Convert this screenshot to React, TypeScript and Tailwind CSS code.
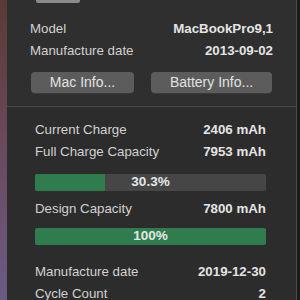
import React from "react";

const font = { fontFamily: '"Liberation Sans", Arial, sans-serif' };

function Row({ label, value }: { label: string; value: string }) {
  return (
    <div className="flex h-[22px] items-center justify-between">
      <span className="text-[13.3px] text-[#d2d2d2]">{label}</span>
      <span className="text-[13.3px] font-bold text-[#e4e4e4]">{value}</span>
    </div>
  );
}

function Bar({ pct, label }: { pct: number; label: string }) {
  return (
    <div className="relative h-[17px] rounded-[2px] bg-[#464646] overflow-hidden">
      <div className="h-full bg-[#2f7d4e]" style={{ width: `${pct}%` }} />
      <div className="absolute inset-0 flex items-center justify-center text-[13.5px] font-bold text-[#e6e6e6]">
        {label}
      </div>
    </div>
  );
}

export default function App() {
  return (
    <div className="flex h-[300px] w-[300px] overflow-hidden" style={font}>
      <div className="w-[7px] shrink-0 bg-gradient-to-b from-[#5a3a36] via-[#6a4a5e] to-[#6b5a86]" />
      <div className="flex flex-1 flex-col overflow-hidden bg-[#2f2f2f]">
        <div className="relative h-[106px] shrink-0 px-[23px]">
          <div className="absolute left-[29px] top-[-3px] h-[6px] w-[44px] rounded-[2px] bg-[#8a8a8a]" />
          <div className="pt-[18px]">
            <Row label="Model" value="MacBookPro9,1" />
            <Row label="Manufacture date" value="2013-09-02" />
          </div>
          <div className="mt-[10px] flex gap-[17px] px-[1px]">
            <div className="flex h-[21px] w-[104px] items-center justify-center rounded-[4px] bg-[#5c5c5c] text-[14px] text-[#e2e2e2] shadow-[0_1px_0_#3a3a3a]">
              Mac Info...
            </div>
            <div className="flex h-[21px] w-[122px] items-center justify-center rounded-[4px] bg-[#5c5c5c] text-[14px] text-[#e2e2e2] shadow-[0_1px_0_#3a3a3a]">
              Battery Info...
            </div>
          </div>
        </div>
        <div className="h-[1px] shrink-0 bg-[#474747]" />
        <div className="min-h-0 flex-1 overflow-hidden bg-[#2c2c2c] pl-[28px] pr-[30px] pt-[12px]">
          <Row label="Current Charge" value="2406 mAh" />
          <Row label="Full Charge Capacity" value="7953 mAh" />
          <div className="mt-[11px]">
            <Bar pct={30.3} label="30.3%" />
          </div>
          <div className="mt-[7px]">
            <Row label="Design Capacity" value="7800 mAh" />
          </div>
          <div className="mt-[8px]">
            <Bar pct={100} label="100%" />
          </div>
          <div className="mt-[16px]">
            <Row label="Manufacture date" value="2019-12-30" />
            <Row label="Cycle Count" value="2" />
          </div>
        </div>
      </div>
      <div className="w-[1px] shrink-0 bg-[#4a4a4a]" />
      <div className="w-[3px] shrink-0 bg-[#1c1c1c]" />
    </div>
  );
}
